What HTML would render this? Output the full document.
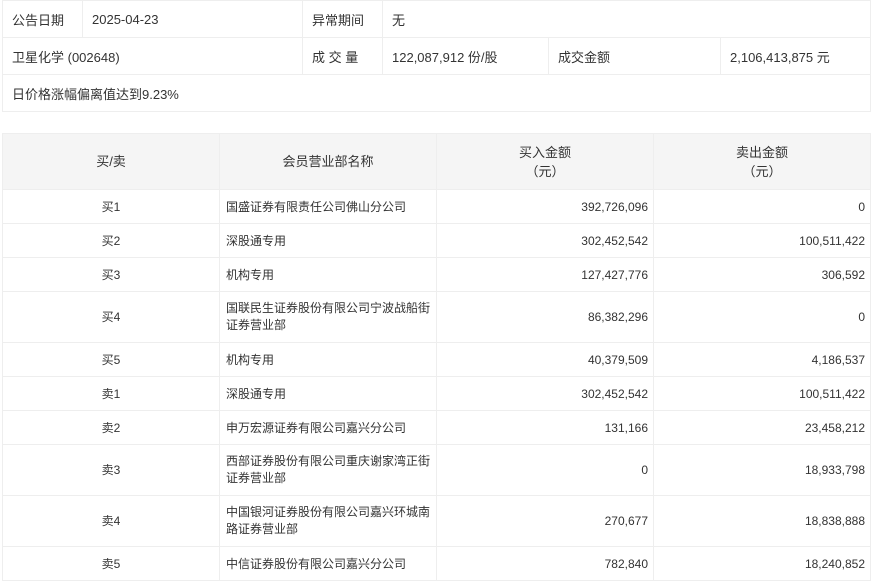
<!DOCTYPE html>
<html><head><meta charset="utf-8"><style>
body{margin:0;background:#fff;font-family:"Liberation Sans","Noto Sans CJK SC",sans-serif;font-size:13px;color:#333}
table{border-collapse:collapse;position:absolute;left:2px;width:868px;table-layout:fixed}
td,th{border:1px solid #eee;padding:0 9px;font-weight:normal;white-space:nowrap}
#t1{top:0}
#t1 td{height:36px}
#t2{top:133px;font-size:12px}
#t2 th{background:#f5f5f5;height:55px;text-align:center;line-height:19px;font-size:13px}
#t2 td{height:33px}
#t2 td.tall{height:50px;white-space:normal;line-height:17px}
#t2 td:nth-child(2){padding-left:6px;padding-right:0}
#t2 td:nth-child(1){text-align:center}
#t2 td:nth-child(3),#t2 td:nth-child(4){text-align:right;padding-right:5px}
</style></head><body>
<table id="t1">
<colgroup><col style="width:80px"><col style="width:220px"><col style="width:80px"><col style="width:166px"><col style="width:172px"><col style="width:150px"></colgroup>
<tr><td>公告日期</td><td>2025-04-23</td><td>异常期间</td><td colspan="3">无</td></tr>
<tr><td colspan="2">卫星化学 (002648)</td><td>成 交 量</td><td>122,087,912 份/股</td><td>成交金额</td><td>2,106,413,875 元</td></tr>
<tr><td colspan="6">日价格涨幅偏离值达到9.23%</td></tr>
</table>
<table id="t2">
<colgroup><col style="width:217px"><col style="width:217px"><col style="width:217px"><col style="width:217px"></colgroup>
<tr><th>买/卖</th><th>会员营业部名称</th><th>买入金额<br>（元）</th><th>卖出金额<br>（元）</th></tr>
<tr><td>买1</td><td>国盛证券有限责任公司佛山分公司</td><td>392,726,096</td><td>0</td></tr>
<tr><td>买2</td><td>深股通专用</td><td>302,452,542</td><td>100,511,422</td></tr>
<tr><td>买3</td><td>机构专用</td><td>127,427,776</td><td>306,592</td></tr>
<tr><td class="tall">买4</td><td class="tall">国联民生证券股份有限公司宁波战船街<br>证券营业部</td><td>86,382,296</td><td>0</td></tr>
<tr><td>买5</td><td>机构专用</td><td>40,379,509</td><td>4,186,537</td></tr>
<tr><td>卖1</td><td>深股通专用</td><td>302,452,542</td><td>100,511,422</td></tr>
<tr><td>卖2</td><td>申万宏源证券有限公司嘉兴分公司</td><td>131,166</td><td>23,458,212</td></tr>
<tr><td class="tall">卖3</td><td class="tall">西部证券股份有限公司重庆谢家湾正街<br>证券营业部</td><td>0</td><td>18,933,798</td></tr>
<tr><td class="tall">卖4</td><td class="tall">中国银河证券股份有限公司嘉兴环城南<br>路证券营业部</td><td>270,677</td><td>18,838,888</td></tr>
<tr><td>卖5</td><td>中信证券股份有限公司嘉兴分公司</td><td>782,840</td><td>18,240,852</td></tr>
</table>
</body></html>
